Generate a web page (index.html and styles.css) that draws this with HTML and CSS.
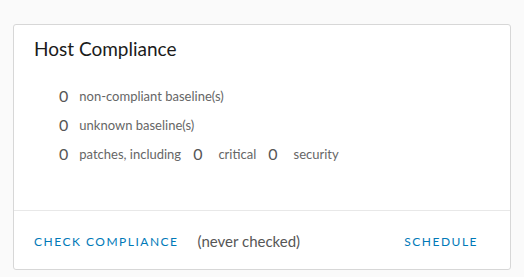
FILE: index.html
```html
<!DOCTYPE html>
<html lang="en">
<head>
  <meta charset="UTF-8">
  <title>Host Compliance</title>
  <link rel="stylesheet" href="styles.css">
</head>
<body>
  <div class="card">
    <div class="card-body">
      <h3 class="card-title">Host Compliance</h3>
      <ul class="stats">
        <li><span class="num">0</span><span class="label">non-compliant baseline(s)</span></li>
        <li><span class="num">0</span><span class="label">unknown baseline(s)</span></li>
        <li>
          <span class="num">0</span><span class="label">patches, including</span>
          <span class="num inner">0</span><span class="label sub">critical</span>
          <span class="num inner">0</span><span class="label sub">security</span>
        </li>
      </ul>
    </div>
    <div class="card-footer">
      <a class="btn-link" href="#check">Check Compliance</a>
      <span class="status">(never checked)</span>
      <a class="btn-link schedule" href="#schedule">Schedule</a>
    </div>
  </div>
</body>
</html>
```

FILE: styles.css
```css
body {
  margin: 0;
  padding: 24px 13px 0;
  background-color: #fafafa;
  font-family: Lato, "Open Sans", sans-serif;
  color: #565656;
}
.card {
  box-sizing: border-box;
  height: 246px;
  background-color: #ffffff;
  border: 1px solid #d7d7d7;
  border-radius: 3px;
  display: flex;
  flex-direction: column;
}
.card-body {
  flex: 1;
  padding: 12px 20px 0;
}
.card-title {
  margin: 0;
  font-size: 19px;
  font-weight: 400;
  line-height: 24px;
  color: #1b1b1b;
}
.stats {
  list-style: none;
  margin: 20px 0 0;
  padding: 0 0 0 25px;
}
.stats li {
  display: flex;
  align-items: center;
  height: 29px;
}
.num {
  font-size: 16px;
  color: #565656;
  margin-right: 11px;
}
.num.inner {
  margin-left: 12px;
}
.label {
  font-size: 13px;
  color: #666666;
}
.label.sub {
  margin-left: 5px;
}
.card-footer {
  box-sizing: border-box;
  height: 59px;
  border-top: 1px solid #e8e8e8;
  display: flex;
  align-items: center;
  padding: 2px 20px 0;
}
.btn-link {
  color: #0079b8;
  text-decoration: none;
  text-transform: uppercase;
  font-size: 12px;
  letter-spacing: 1.5px;
}
.status {
  margin-left: 19px;
  font-size: 15px;
  color: #565656;
}
.schedule {
  margin-left: auto;
  margin-right: 12px;
}
```
